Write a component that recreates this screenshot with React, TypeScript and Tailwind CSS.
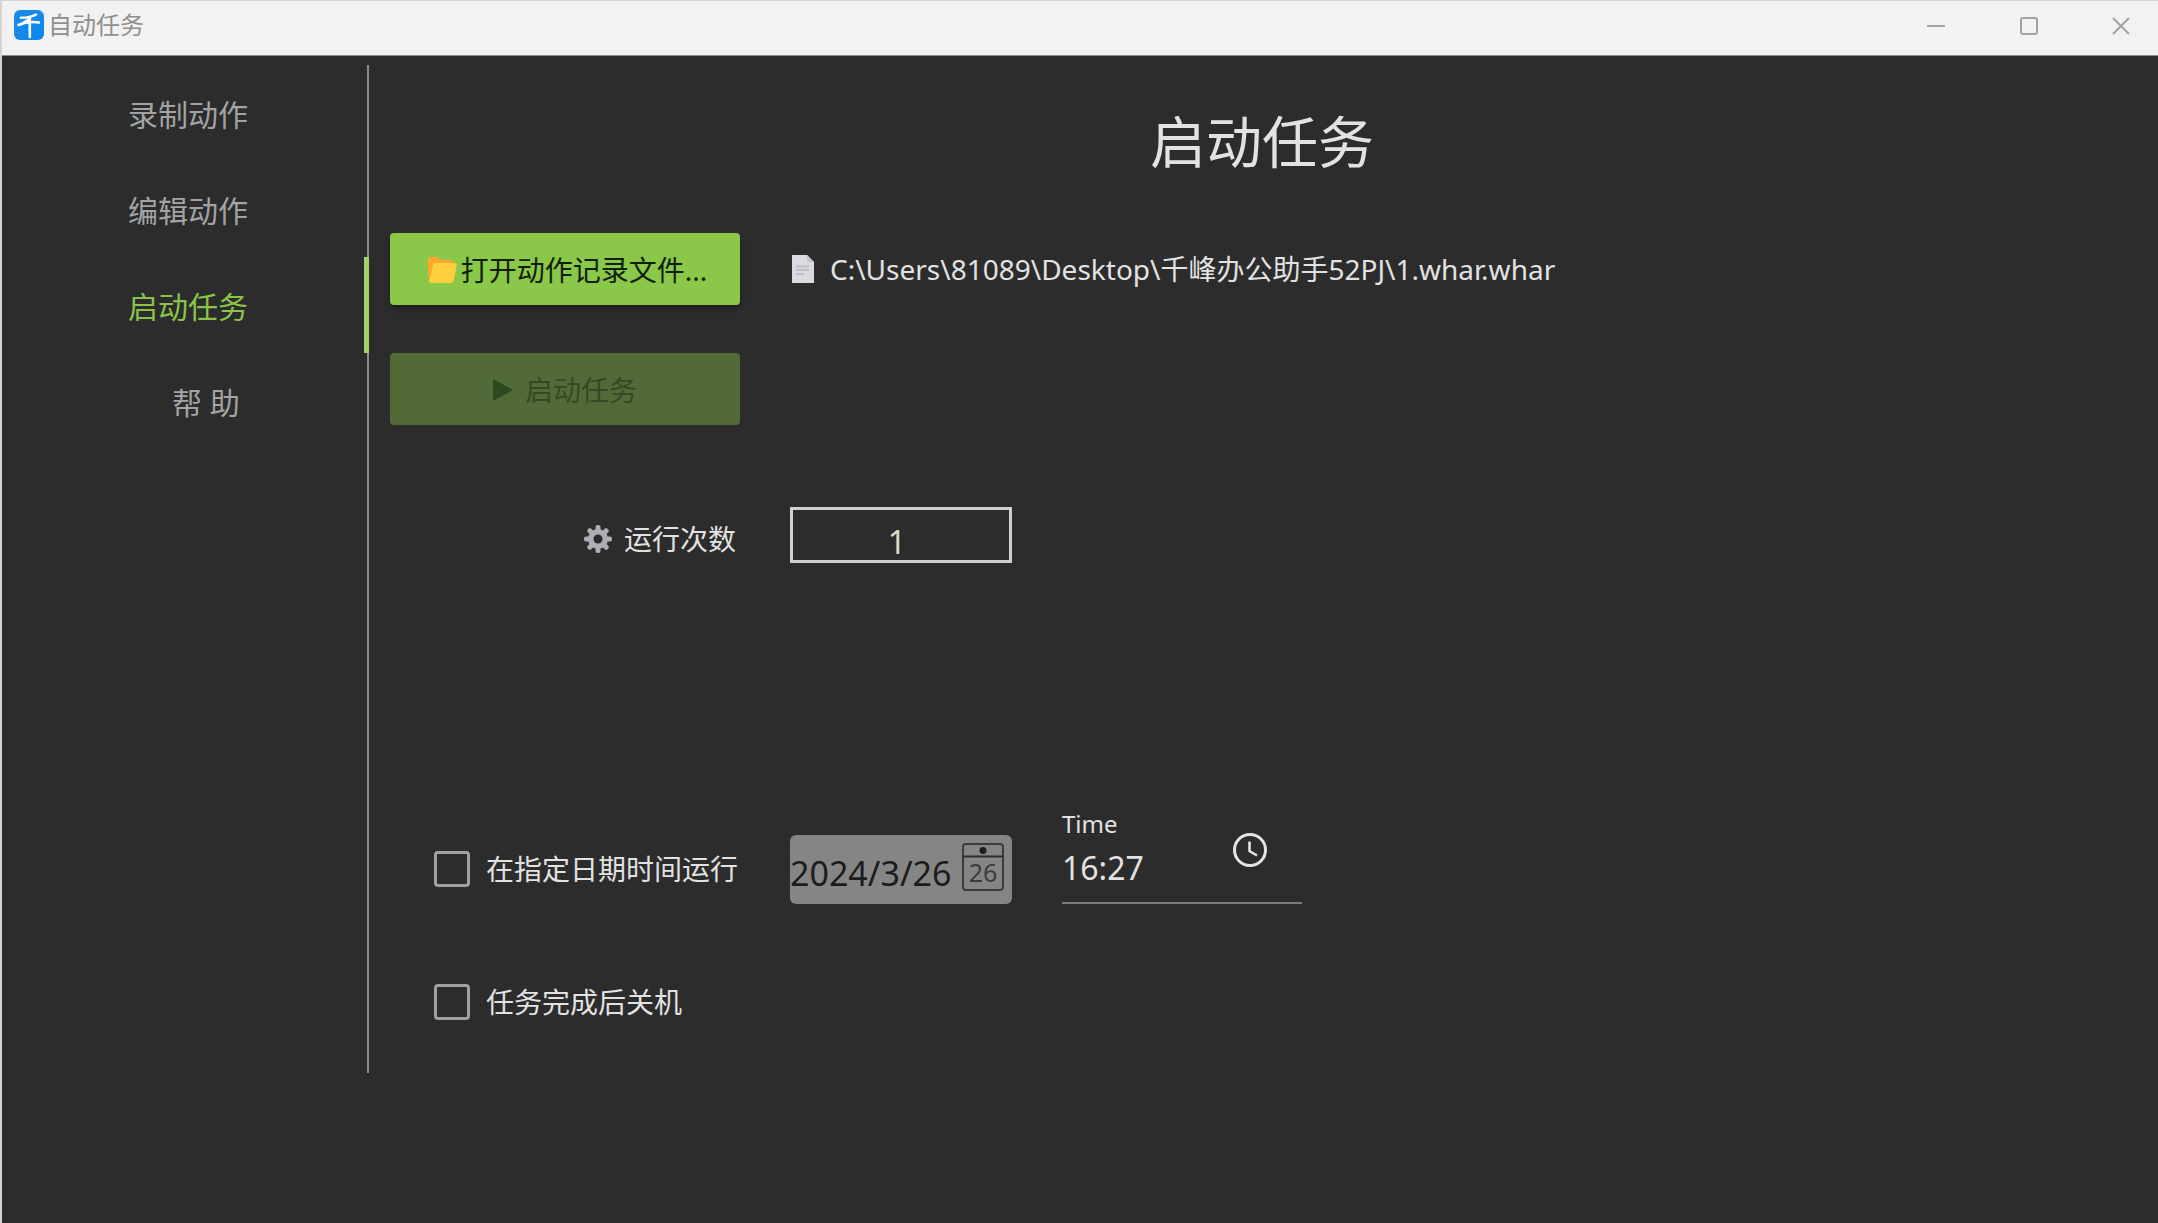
import React, { useState } from "react";

const UI_FONT = "font-['Noto_Sans','Noto_Sans_CJK_SC',sans-serif]";

const navItems = [
  { id: "record", label: "录制动作", pad: "pl-[126px]" },
  { id: "edit", label: "编辑动作", pad: "pl-[126px]" },
  { id: "start", label: "启动任务", pad: "pl-[126px]" },
  { id: "help", label: "帮 助", pad: "pl-[170px]" },
];

function AppLogo() {
  return (
    <svg viewBox="0 0 30 30" className="size-[30px]" aria-hidden="true">
      <defs>
        <linearGradient id="logo" x1="0" y1="0" x2="1" y2="1">
          <stop offset="0" stopColor="#1b8be8" />
          <stop offset="1" stopColor="#0b86ee" />
        </linearGradient>
      </defs>
      <rect width="30" height="30" rx="6" fill="url(#logo)" />
      <path d="M23 0h1a6 6 0 0 1 6 6v1c-1-4-3-6-7-7z" fill="#8fa4f0" />
      <path
        d="M22 4.500C18 7 12.500 7.800 7 7.800M4.500 15c6-2.800 13-3.600 20.500-2.500M10 12.500c3-1 5-3 6.500-5.500M15.800 9.500V27"
        fill="none"
        stroke="#fff"
        strokeWidth="2.600"
        strokeLinecap="round"
      />
    </svg>
  );
}

function FolderIcon() {
  return (
    <svg viewBox="0 0 30 28" className="h-7 w-[30px]" aria-hidden="true">
      <path d="M1 4c0-2 1-3 3-3h6l4 3h9c2 0 3 1 3 3v14H3c-1 0-2-1-2-2z" fill="#ffa62b" />
      <path d="M6 9c.4-1.300 1-2 2.500-2H27c2 0 3 1 2.600 3l-2.800 14c-.4 2-1.300 3-3.200 3H4.500c-2 0-3-1-2.500-3z" fill="#ffcf3d" />
    </svg>
  );
}

function PageIcon() {
  return (
    <svg viewBox="0 0 22 28" className="h-7 w-[22px]" aria-hidden="true">
      <path d="M0 0h15l7 7v21H0z" fill="#dcdae0" />
      <path d="M15 0v7h7z" fill="#c6c4cc" />
      <path d="M4 11.500h13M4 15h13M4 19h8" stroke="#bebcc4" strokeWidth="1.800" />
    </svg>
  );
}

function GearIcon() {
  return (
    <svg viewBox="0 0 28 28" className="size-7" aria-hidden="true">
      <g fill="#aeacb4">
        {[0, 45, 90, 135].map((a) => (
          <rect key={a} x="11.500" y="0" width="5" height="28" rx="2" transform={`rotate(${a} 14 14)`} />
        ))}
        <circle cx="14" cy="14" r="10" />
      </g>
      <circle cx="14" cy="14" r="4.500" fill="#2c2c2c" />
    </svg>
  );
}

function CalendarIcon() {
  return (
    <svg viewBox="0 0 42 48" className="h-12 w-[42px]" aria-hidden="true">
      <rect x="1" y="1" width="40" height="46" rx="3" fill="none" stroke="#3c3c3c" strokeWidth="2" />
      <path d="M1 13.500h40" stroke="#2e2e2e" strokeWidth="2" />
      <circle cx="21" cy="7.500" r="3.500" fill="#1c1c1c" />
      <text x="21" y="39" textAnchor="middle" fontSize="25" fill="#3c3c3c">
        26
      </text>
    </svg>
  );
}

function ClockIcon() {
  return (
    <svg viewBox="0 0 36 36" className="size-9" aria-hidden="true" fill="none" stroke="#e4e4e4" strokeWidth="3">
      <circle cx="18" cy="18" r="15.500" />
      <path d="M17.500 9.500v9.500l7.500 4.500" strokeWidth="2.600" />
    </svg>
  );
}

function TitleBar() {
  const btn = "flex h-full w-[93px] items-center justify-center";
  return (
    <header className="flex h-14 items-center border-t border-b border-t-[#d4d4d4] border-b-[#8a8a8a] bg-[#f2f2f2] pl-3">
      <div className="flex items-center gap-1 pb-1.5">
        <AppLogo />
        <span className="text-2xl leading-8 text-[#8f8f8f]">自动任务</span>
      </div>
      <div className="ml-auto flex h-full pb-1 text-[#a2a2a2]">
        <button type="button" aria-label="最小化" className={btn}>
          <svg viewBox="0 0 18 18" className="size-[18px]"><path d="M0 9h18" stroke="currentColor" strokeWidth="2" /></svg>
        </button>
        <button type="button" aria-label="最大化" className={btn}>
          <svg viewBox="0 0 18 18" className="size-[18px]"><rect x="1" y="1" width="16" height="16" rx="2" fill="none" stroke="currentColor" strokeWidth="2" /></svg>
        </button>
        <button type="button" aria-label="关闭" className="flex h-full w-[83px] items-center justify-center pl-2">
          <svg viewBox="0 0 18 18" className="size-[18px]"><path d="M1 1l16 16M17 1L1 17" stroke="currentColor" strokeWidth="2" /></svg>
        </button>
      </div>
    </header>
  );
}

function Check({ id, label }: { id: string; label: string }) {
  return (
    <label htmlFor={id} className="flex items-center gap-4 pl-11">
      <input
        id={id}
        type="checkbox"
        className="size-9 shrink-0 appearance-none rounded-sm border-3 border-[#a0a0a0] checked:bg-[#8bc34a]"
      />
      <span className="whitespace-nowrap">{label}</span>
    </label>
  );
}

export default function App() {
  const [active, setActive] = useState("start");
  return (
    <div className={`${UI_FONT} flex min-h-screen flex-col border-l-2 border-[#d4d4d4] bg-[#2c2c2c] text-[28px] leading-10 text-[#e2e2e2]`}>
      <TitleBar />
      <div className="flex flex-1 items-start pt-[9px]">
        <nav className="flex h-[1008px] w-[367px] shrink-0 flex-col border-r-2 border-[#8a8a8a]">
          {navItems.map((n) => (
            <button
              key={n.id}
              type="button"
              onClick={() => setActive(n.id)}
              className={`h-24 pt-1 text-left text-[30px] ${n.pad} ${
                active === n.id ? "-mr-0.5 border-r-[5px] border-[#9fd46a] text-[#8bc34a]" : "text-[#a3a3a3]"
              }`}
            >
              {n.label}
            </button>
          ))}
        </nav>
        <main className="flex-1 pl-[21px]">
          <h1 className="pt-[38px] pr-6 text-center text-[56px] leading-[76px]">启动任务</h1>
          <div className="mt-[54px] grid grid-cols-[350px_1fr] items-center gap-x-[50px]">
            <button type="button" className="flex h-[72px] items-center justify-center gap-1 rounded-sm bg-[#8bc748] pt-0.5 pl-1 text-[#102008] shadow-md shadow-black/30">
              <FolderIcon />
              打开动作记录文件...
            </button>
            <div className="flex items-center gap-4 pl-0.5 whitespace-nowrap">
              <PageIcon />
              <span>C:\Users\81089\Desktop\千峰办公助手52PJ\1.whar.whar</span>
            </div>

            <button type="button" disabled className="mt-12 flex h-[72px] items-center justify-center gap-3 rounded-sm bg-[#526a37] pt-0.5 text-[#334a25]">
              <svg viewBox="0 0 20 22" className="h-[22px] w-5" aria-hidden="true"><path d="M0 0l20 11L0 22z" fill="#2b4a20" /></svg>
              启动任务
            </button>
            <div />

            <label htmlFor="count" className="mt-[82px] flex h-14 items-center justify-end gap-3 pt-2 pr-1">
              <GearIcon />
              运行次数
            </label>
            <input
              id="count"
              defaultValue="1"
              className="mt-[82px] h-14 w-[222px] border-[3px] border-[#d0d0d0] bg-transparent pt-3 pr-2 text-center text-[32px] text-[#d8dcc0] outline-none"
            />

            <div className="mt-[243px] flex h-[98px] items-end pb-[15px]">
              <Check id="schedule" label="在指定日期时间运行" />
            </div>
            <div className="mt-[243px] flex h-[98px] items-end gap-[50px]">
              <div className="flex h-[69px] w-[222px] items-start justify-between rounded-md bg-[#858585] pt-2 pr-2">
                <input
                  aria-label="日期"
                  defaultValue="2024/3/26"
                  className="mt-1.5 h-12 w-[170px] bg-transparent text-[34px] text-[#1c1c1c] outline-none"
                />
                <button type="button" aria-label="选择日期"><CalendarIcon /></button>
              </div>
              <div className="flex h-[98px] w-60 items-start justify-between border-b-2 border-[#7c7c7c]">
                <div className="flex flex-col">
                  <label htmlFor="time" className="text-2xl leading-9">Time</label>
                  <input id="time" defaultValue="16:27" className="h-[50px] w-32 bg-transparent text-[32px] outline-none" />
                </div>
                <button type="button" aria-label="选择时间" className="mt-[26px] mr-[34px]"><ClockIcon /></button>
              </div>
            </div>

            <div className="mt-[78px]">
              <Check id="shutdown" label="任务完成后关机" />
            </div>
          </div>
        </main>
      </div>
    </div>
  );
}
